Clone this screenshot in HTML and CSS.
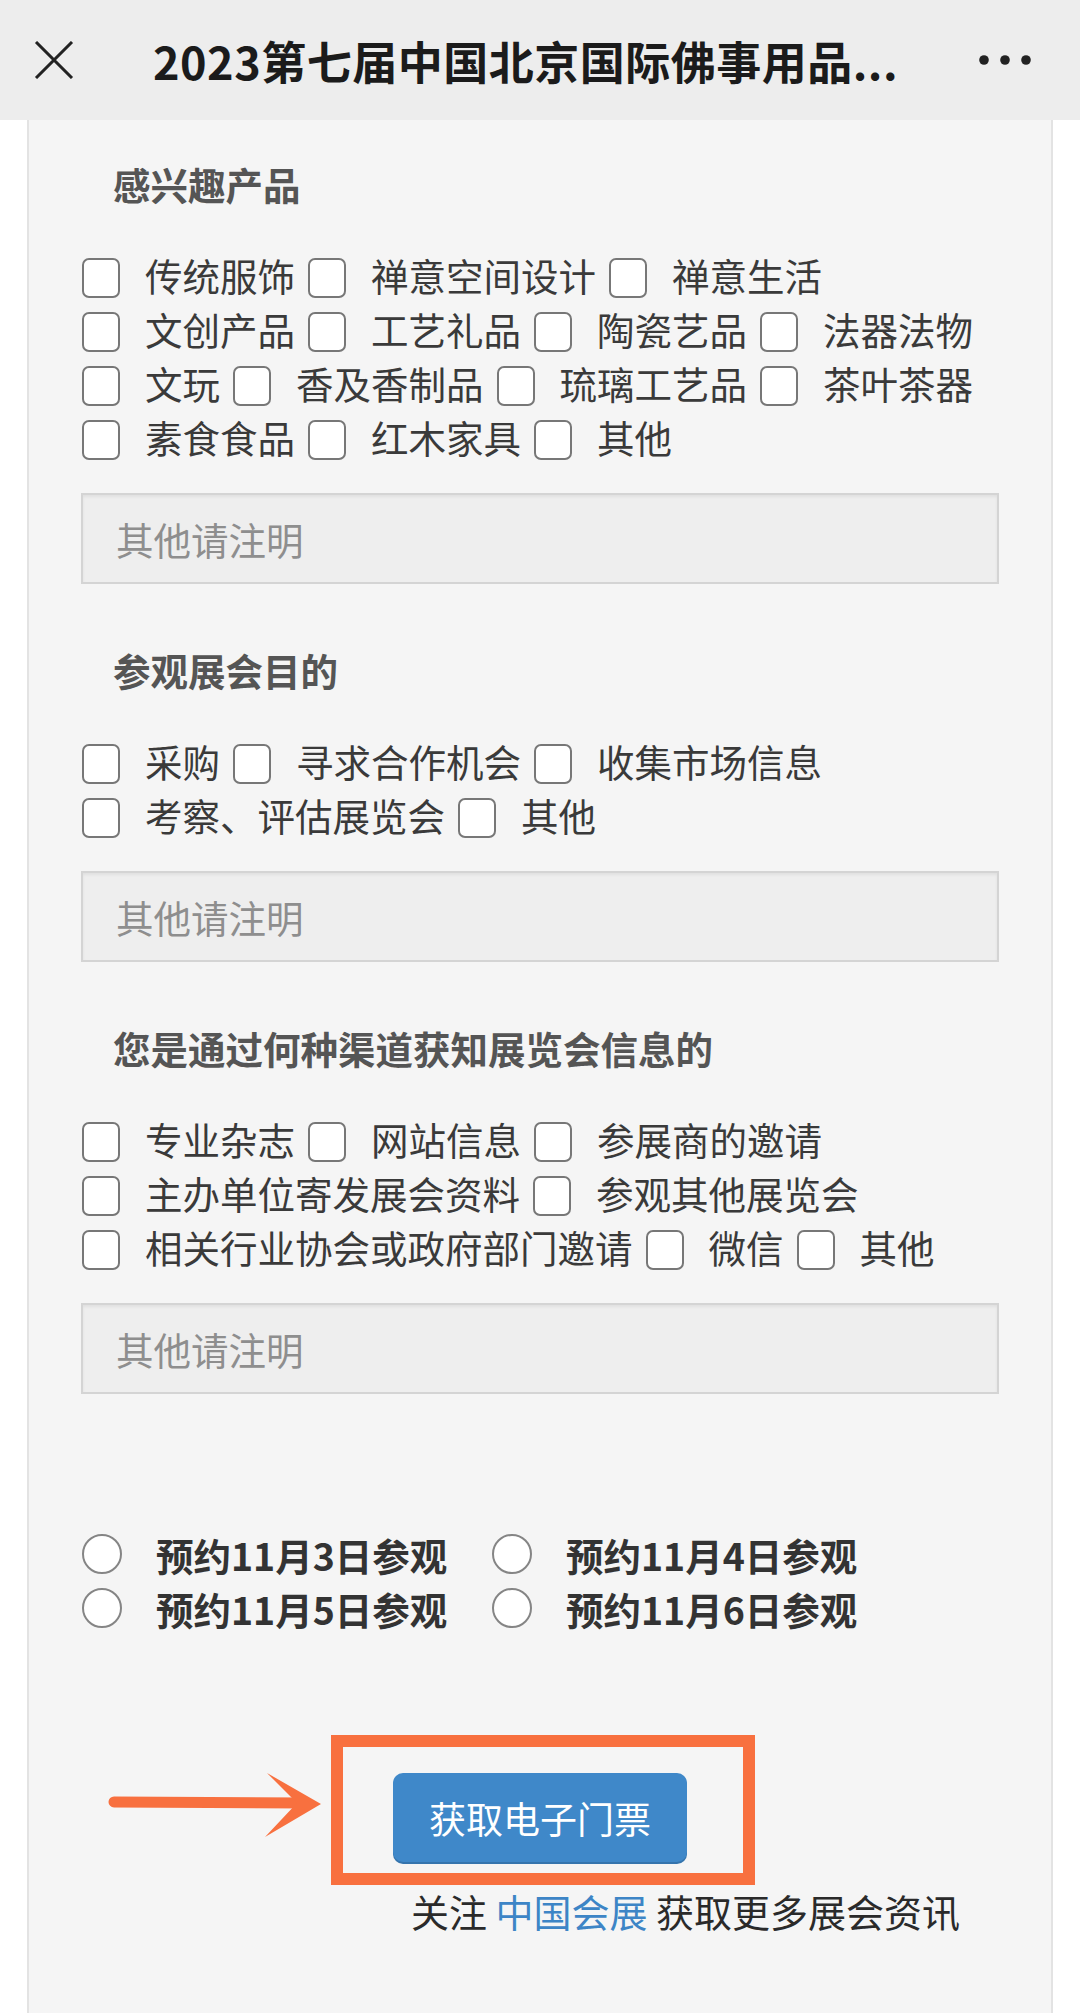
FILE: index.html
```html
<!DOCTYPE html>
<html lang="zh-CN">
<head>
<meta charset="utf-8">
<title>2023第七届中国北京国际佛事用品博览会</title>
<link rel="stylesheet" href="styles.css">
</head>
<body>
<header class="topbar">
  <svg class="close" viewBox="0 0 40 38" aria-hidden="true"><path d="M2 1 L38 37 M38 1 L2 37" stroke="#222" stroke-width="3" fill="none"/></svg>
  <div class="title">2023第七届中国北京国际佛事用品...</div>
  <svg class="more" viewBox="0 0 52 12" aria-hidden="true"><circle cx="5" cy="6" r="4.8" fill="#222"/><circle cx="26" cy="6" r="4.8" fill="#222"/><circle cx="47" cy="6" r="4.8" fill="#222"/></svg>
</header>

<main class="card">
  <section class="group">
    <h2 class="group-title">感兴趣产品</h2>
    <div class="options">
      <label class="opt"><input type="checkbox" class="cb"><span>传统服饰</span></label>
      <label class="opt"><input type="checkbox" class="cb"><span>禅意空间设计</span></label>
      <label class="opt"><input type="checkbox" class="cb"><span>禅意生活</span></label>
      <label class="opt"><input type="checkbox" class="cb"><span>文创产品</span></label>
      <label class="opt"><input type="checkbox" class="cb"><span>工艺礼品</span></label>
      <label class="opt"><input type="checkbox" class="cb"><span>陶瓷艺品</span></label>
      <label class="opt"><input type="checkbox" class="cb"><span>法器法物</span></label>
      <label class="opt"><input type="checkbox" class="cb"><span>文玩</span></label>
      <label class="opt"><input type="checkbox" class="cb"><span>香及香制品</span></label>
      <label class="opt"><input type="checkbox" class="cb"><span>琉璃工艺品</span></label>
      <label class="opt"><input type="checkbox" class="cb"><span>茶叶茶器</span></label>
      <label class="opt"><input type="checkbox" class="cb"><span>素食食品</span></label>
      <label class="opt"><input type="checkbox" class="cb"><span>红木家具</span></label>
      <label class="opt"><input type="checkbox" class="cb"><span>其他</span></label>
    </div>
    <input class="other" type="text" placeholder="其他请注明">
  </section>

  <section class="group">
    <h2 class="group-title">参观展会目的</h2>
    <div class="options">
      <label class="opt"><input type="checkbox" class="cb"><span>采购</span></label>
      <label class="opt"><input type="checkbox" class="cb"><span>寻求合作机会</span></label>
      <label class="opt"><input type="checkbox" class="cb"><span>收集市场信息</span></label>
      <label class="opt"><input type="checkbox" class="cb"><span>考察、评估展览会</span></label>
      <label class="opt"><input type="checkbox" class="cb"><span>其他</span></label>
    </div>
    <input class="other" type="text" placeholder="其他请注明">
  </section>

  <section class="group">
    <h2 class="group-title">您是通过何种渠道获知展览会信息的</h2>
    <div class="options">
      <label class="opt"><input type="checkbox" class="cb"><span>专业杂志</span></label>
      <label class="opt"><input type="checkbox" class="cb"><span>网站信息</span></label>
      <label class="opt"><input type="checkbox" class="cb"><span>参展商的邀请</span></label>
      <label class="opt"><input type="checkbox" class="cb"><span>主办单位寄发展会资料</span></label>
      <label class="opt"><input type="checkbox" class="cb"><span>参观其他展览会</span></label>
      <label class="opt"><input type="checkbox" class="cb"><span>相关行业协会或政府部门邀请</span></label>
      <label class="opt"><input type="checkbox" class="cb"><span>微信</span></label>
      <label class="opt"><input type="checkbox" class="cb"><span>其他</span></label>
    </div>
    <input class="other" type="text" placeholder="其他请注明">
  </section>

  <div class="dates">
    <label class="date"><input type="radio" name="day" class="rd"><span>预约11月3日参观</span></label>
    <label class="date"><input type="radio" name="day" class="rd"><span>预约11月4日参观</span></label>
    <label class="date"><input type="radio" name="day" class="rd"><span>预约11月5日参观</span></label>
    <label class="date"><input type="radio" name="day" class="rd"><span>预约11月6日参观</span></label>
  </div>

  <div class="cta">
    <svg class="arrow" viewBox="0 0 230 90" aria-hidden="true">
      <line x1="14" y1="41" x2="205" y2="42" stroke="#f8703f" stroke-width="11" stroke-linecap="round"/>
      <polygon points="167,12 221,43 165,76 197,42" fill="#f8703f"/>
    </svg>
    <button class="ticket-btn" type="button">获取电子门票</button>
    <div class="highlight"></div>
  </div>
  <p class="follow">关注 <span class="brand">中国会展</span> 获取更多展会资讯</p>
</main>
</body>
</html>
```

FILE: styles.css
```css
* { box-sizing: border-box; }

html, body {
  margin: 0;
  padding: 0;
}

body {
  background: #ffffff;
  font-family: "Noto Sans CJK SC", "Noto Sans", sans-serif;
  color: #3a3a3a;
}

.topbar {
  height: 120px;
  background: #ededed;
  display: flex;
  align-items: center;
  padding: 0 49px 0 34px;
}

.close {
  width: 40px;
  height: 38px;
  flex: none;
}

.title {
  flex: 1;
  margin-left: 79px;
  font-size: 45px;
  font-weight: 700;
  color: #1b1b1b;
  letter-spacing: 0.5px;
  white-space: nowrap;
  line-height: 1;
}

.more {
  width: 52px;
  height: 12px;
  flex: none;
}

.card {
  margin-left: 27px;
  width: 1026px;
  min-height: 1893px;
  border-left: 2px solid #e3e3e3;
  border-right: 2px solid #e3e3e3;
  background: #f5f5f5;
  padding: 39px 52px 80px;
}

.group + .group {
  margin-top: 61px;
}

.group-title {
  margin: 0 0 38px;
  padding-left: 32px;
  font-size: 37.5px;
  line-height: 50px;
  font-weight: 700;
  color: #555555;
}

.options {
  display: flex;
  flex-wrap: wrap;
  column-gap: 13px;
  padding-left: 1px;
}

.opt {
  display: flex;
  align-items: center;
  height: 54px;
  font-size: 37.5px;
  color: #3a3a3a;
  white-space: nowrap;
}

.cb {
  appearance: none;
  -webkit-appearance: none;
  flex: none;
  margin: 8px 25px 0 0;
  width: 38px;
  height: 40px;
  border: 2px solid #777777;
  border-radius: 7px;
  background: #ffffff;
}

.other {
  display: block;
  width: 100%;
  height: 91px;
  margin-top: 30px;
  border: 2px solid #d4d4d4;
  border-radius: 0;
  background: #eeeeee;
  padding: 0 0 0 33px;
  font-size: 37.5px;
  font-family: inherit;
  color: #333333;
  box-shadow: inset 0 2px 3px rgba(0, 0, 0, 0.06);
  outline: none;
}

.other::placeholder {
  color: #8e8e8e;
}

.dates {
  display: grid;
  grid-template-columns: 410px 410px;
  margin-top: 133px;
  padding-left: 1px;
}

.date {
  display: flex;
  align-items: center;
  height: 54px;
  font-size: 37.5px;
  font-weight: 700;
  color: #333333;
  white-space: nowrap;
}

.rd {
  appearance: none;
  -webkit-appearance: none;
  flex: none;
  width: 40px;
  height: 40px;
  margin: 0 34px 0 0;
  border: 2px solid #858585;
  border-radius: 50%;
  background: #ffffff;
}

.cta {
  position: relative;
  width: 294px;
  margin: 138px auto 0;
}

.ticket-btn {
  display: block;
  width: 294px;
  height: 89px;
  border: none;
  border-radius: 10px;
  background: #3f88c9;
  color: #ffffff;
  font-size: 37px;
  font-family: inherit;
  box-shadow: 0 2px 0 #3574ad;
}

.highlight {
  position: absolute;
  left: -62px;
  top: -38px;
  width: 424px;
  height: 150px;
  border: 12px solid #f8703f;
  pointer-events: none;
}

.arrow {
  position: absolute;
  left: -293px;
  top: -12px;
  width: 230px;
  height: 90px;
}

.follow {
  margin: 24px 0 0;
  padding-left: 330px;
  font-size: 38px;
  line-height: 50px;
  color: #2a2a2a;
  white-space: nowrap;
}

.follow .brand {
  color: #3d85c6;
}
```
